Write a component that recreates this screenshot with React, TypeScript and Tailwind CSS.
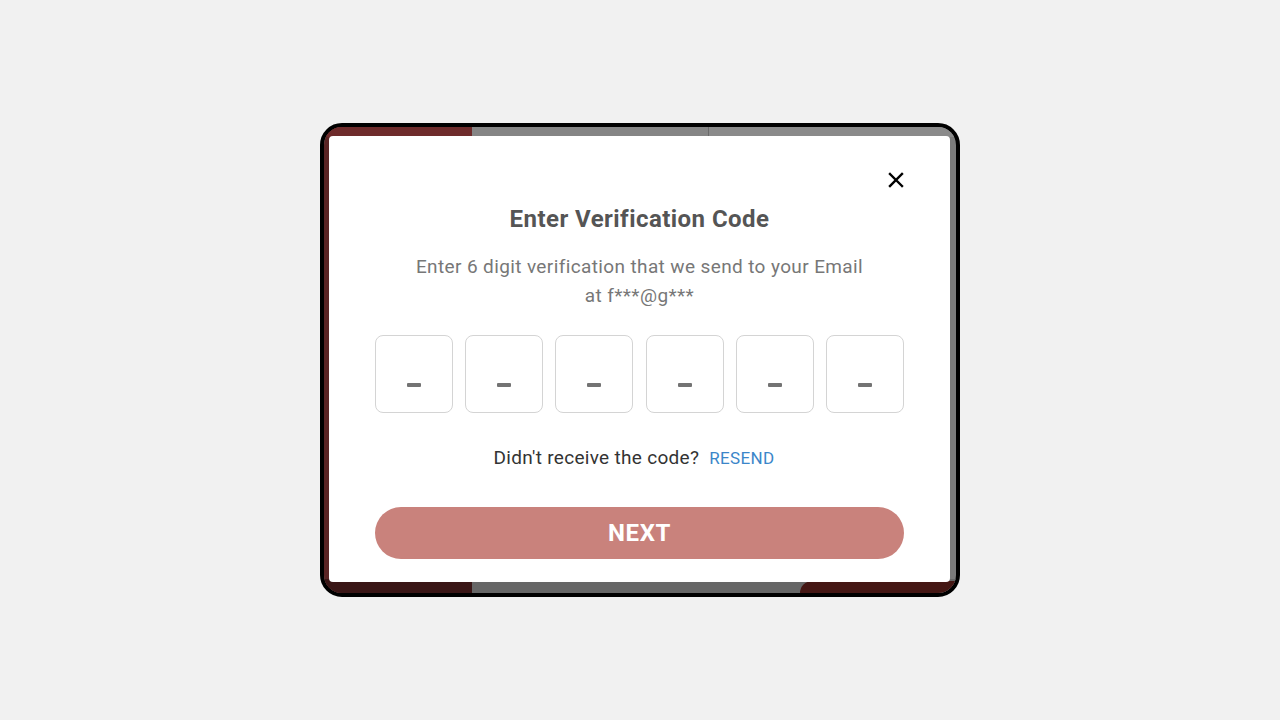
const OtpBox = () => {
  return (
    <div className="w-[78px] h-[78px] rounded-[8px] border border-[#d4d4d4] bg-white flex justify-center pt-[47px]">
      <span className="block w-[14px] h-[4px] rounded-[1px] bg-[#737373]" />
    </div>
  );
};

const App = () => {
  return (
    <main
      className="w-full h-screen bg-[#f1f1f1] flex items-center justify-center"
      style={{ fontFamily: "Roboto, 'Noto Sans', sans-serif" }}
    >
      <div className="relative w-[640px] h-[474px] border-4 border-black rounded-[22px] overflow-hidden bg-[#7b7b7b]">
        {/* dimmed screen behind the dialog */}
        <div className="flex h-full">
          <div className="w-[148px] h-full flex flex-col bg-[#5a2424]">
            <div className="h-[10px] bg-[#6e2b2b]" />
            <div className="flex-1" />
            <div className="h-[14px] bg-[#3a1616]" />
          </div>
          <div className="flex-1 flex flex-col">
            <div className="h-[10px] flex">
              <div className="w-[236px] bg-[#858585]" />
              <div className="flex-1 border-l border-[#6a6a6a] bg-[#8a8a8a]" />
            </div>
            <div className="flex-1" />
            <div className="h-[14px] flex bg-[#666666] items-end">
              <div className="flex-1" />
              <div className="w-[156px] h-[12px] rounded-tl-[20px] bg-[#451714]" />
            </div>
          </div>
        </div>

        <div className="absolute left-[5px] top-[9px] right-[6px] bottom-[11px] bg-white rounded-[4px] px-[46px] pt-[36px]">
          <div className="flex justify-end">
            <button className="w-[16px] h-[16px] text-black">
              <svg viewBox="0 0 16 16" width="16" height="16" fill="none" stroke="currentColor" strokeWidth="2.4" strokeLinecap="square">
                <path d="M2 2L14 14M14 2L2 14" />
              </svg>
            </button>
          </div>

          <h2 className="mt-4 text-center text-[24px] leading-[30px] font-bold tracking-[0.45px] text-[#555555]">
            Enter Verification Code
          </h2>

          <p className="mt-[18px] mx-auto max-w-[458px] text-center text-[19px] leading-[29px] tracking-[0.38px] text-[#777777]">
            Enter 6 digit verification that we send to your Email at f***@g***
          </p>

          <div className="mt-[25px] flex justify-between">
            <OtpBox />
            <OtpBox />
            <OtpBox />
            <OtpBox />
            <OtpBox />
            <OtpBox />
          </div>

          <div className="mt-[33px] pr-[11px] flex items-center justify-center gap-[10px] leading-[24px]">
            <span className="text-[19px] tracking-[0.3px] text-[#333333]">Didn't receive the code?</span>
            <button className="text-[17px] text-[#3b86c9] tracking-[0.35px]">RESEND</button>
          </div>

          <button className="mt-[37px] w-full h-[52px] rounded-full bg-[#c9827c] text-white text-[24px] font-bold tracking-[0.6px]">
            NEXT
          </button>
        </div>
      </div>
    </main>
  );
};

export default App;
